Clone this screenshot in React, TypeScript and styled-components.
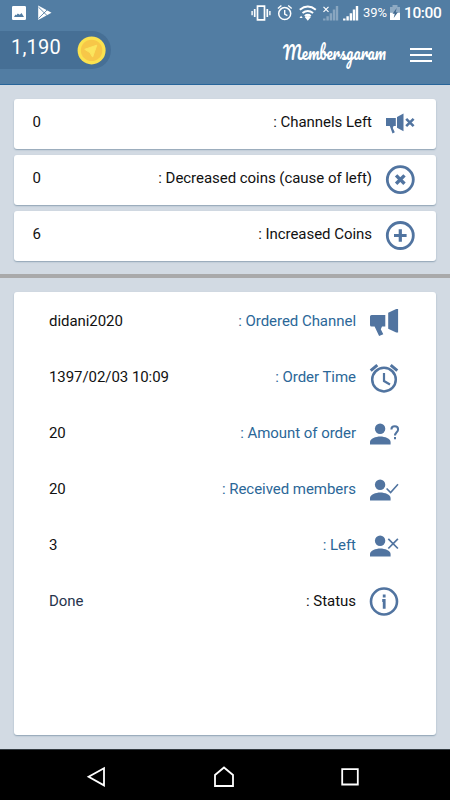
import React from "react";
import styled, { createGlobalStyle } from "styled-components";

const GlobalStyle = createGlobalStyle`
  * { box-sizing: border-box; }
  body { margin: 0; font-family: Roboto, "Noto Sans", sans-serif; }
  svg { display: block; overflow: visible; flex: none; }
`;

const BLUE = "#5174a0";

const Screen = styled.div`
  width: 450px;
  height: 800px;
  display: flex;
  flex-direction: column;
  background: #d2dae3;
  overflow: hidden;
`;

const Header = styled.header`
  height: 85px;
  flex: none;
  background: #527da3;
  border-bottom: 1px solid #27659a;
`;

const StatusBar = styled.div`
  height: 26px;
  display: flex;
  align-items: center;
  padding: 0 8px 0 11px;
  color: #fff;
`;

const StatusGroup = styled.div`
  display: flex;
  align-items: center;
  &:last-child { margin-left: auto; }
`;

const Percent = styled.span`
  width: 27px;
  padding-left: 1px;
  font-size: 13px;
  line-height: 26px;
  letter-spacing: -0.1px;
`;

const Clock = styled.span`
  width: 38px;
  font-size: 15.5px;
  line-height: 27px;
  font-weight: 500;
  letter-spacing: -0.4px;
`;

const AppBar = styled.div`
  height: 58px;
  padding-top: 5px;
  display: flex;
  align-items: flex-start;
`;

const CoinPill = styled.div`
  width: 111px;
  height: 38px;
  padding-left: 11px;
  display: flex;
  align-items: center;
  border-radius: 0 19px 19px 0;
  background: #466f95;
  color: #fff;
`;

const CoinCount = styled.span`
  width: 66px;
  font-size: 20px;
  line-height: 24px;
  margin-top: -6px;
  letter-spacing: 0.2px;
`;

const Brand = styled.svg`
  margin: 5px 23px 0 auto;
`;

const MenuButton = styled.button`
  width: 22px;
  height: 38px;
  margin: 5px 18px 0 0;
  padding: 0;
  border: 0;
  background: none;
  display: flex;
  flex-direction: column;
  align-items: stretch;
  padding-top: 12px;
  gap: 4px;
`;

const MenuLine = styled.span`
  height: 2px;
  background: #fff;
`;

const Summary = styled.section`
  padding: 14px 14px 13px;
  display: flex;
  flex-direction: column;
  gap: 6px;
`;

const Card = styled.div`
  background: #fff;
  border-radius: 3px;
  box-shadow: 0 1px 1.5px #8fa3b4;
`;

const SummaryCard = styled(Card)`
  height: 50px;
  display: flex;
  align-items: center;
  padding: 0 21px 4px 18.5px;
`;

const Divider = styled.div`
  height: 4px;
  flex: none;
  background: #a9a9aa;
`;

const Details = styled(Card)`
  height: 443px;
  flex: none;
  margin: 14px 14px 0;
`;

const DetailRow = styled.div`
  height: 56px;
  display: flex;
  align-items: center;
  padding: 2px 37px 0 35px;
`;

const Value = styled.span<{ $color?: string }>`
  font-size: 15px;
  line-height: 20px;
  letter-spacing: -0.06px;
  margin-right: auto;
  color: ${(p) => p.$color ?? "#111"};
`;

const Label = styled.span<{ $color?: string }>`
  font-size: 15px;
  line-height: 20px;
  letter-spacing: -0.04px;
  margin-right: 13px;
  color: ${(p) => p.$color ?? "#111"};
`;

const NavBar = styled.nav`
  height: 51px;
  margin-top: auto;
  flex: none;
  background: #000;
  border-top: 1px solid #333a40;
  display: flex;
  align-items: center;
  justify-content: space-between;
  padding: 3px 90px 0 86px;
`;

const IconBox = styled.svg<{ $drop?: number }>`
  margin-top: ${(p) => p.$drop ?? 0}px;
`;

const Icon = ({ children, drop }: { children: React.ReactNode; drop?: number }) => (
  <IconBox $drop={drop} width="30" height="30" viewBox="0 0 30 30" fill="none" stroke={BLUE}>
    {children}
  </IconBox>
);

const ChannelLeftIcon = () => (
  <Icon drop={4}>
    <path d="M1 9h9.8v8H8.6l-.8 2 2 4.2-2.3 1.2L4.8 17H1zM12 8l6.5-3.4v17.7L12 18.7z" fill={BLUE} stroke="none" />
    <path d="m21.2 9.8 7.4 7.4m0-7.4-7.4 7.4" strokeWidth="2.6" />
  </Icon>
);
const DecreasedIcon = () => (
  <Icon drop={4}>
    <circle cx="15.3" cy="14.6" r="13" strokeWidth="2.8" />
    <path d="m11.1 10.4 8.4 8.4m0-8.4-8.4 8.4" strokeWidth="3.4" />
  </Icon>
);
const IncreasedIcon = () => (
  <Icon drop={4}>
    <circle cx="15.3" cy="14.5" r="13" strokeWidth="2.8" />
    <path d="M15.3 8.2v12.6M9 14.5h12.6" strokeWidth="3.2" />
  </Icon>
);
const MegaphoneIcon = () => (
  <Icon>
    <path
      d="M2.6 9H16.3v11.6H13l-1.2 2.6 2.5 5-4.2 1.9L5.6 20.6H2.6Q1 20.6 1 19v-8.4Q1 9 2.6 9zM19.2 6.7l8-3.7h1.9v23.4h-1.9l-8-3.7z"
      fill={BLUE}
      stroke="none"
    />
  </Icon>
);
const AlarmIcon = () => (
  <Icon>
    <circle cx="15" cy="17.6" r="11.8" strokeWidth="2.5" />
    <path d="m1.7 8.6 6.6-5.5m13.4 0 6.6 5.5" strokeWidth="3" />
    <path d="M15 11v8l6 3.5" strokeWidth="2.2" />
  </Icon>
);
const Person = () => (
  <>
    <circle cx="11.1" cy="10.8" r="5.2" fill={BLUE} stroke="none" />
    <path d="M1 26.4v-2.5c0-3.4 5.8-5.5 10.3-5.5s10.3 2.1 10.3 5.5v2.5z" fill={BLUE} stroke="none" />
  </>
);
const AmountIcon = () => (
  <Icon>
    <Person />
    <path d="M22.4 11.4c0-4.1 6.7-4.1 6.7 0 0 2.7-3.1 3-3.1 6.2m0 1.5v2.2" strokeWidth="2" />
  </Icon>
);
const ReceivedIcon = () => (
  <Icon>
    <Person />
    <path d="m17.6 14.5 4 4L29 10.3" strokeWidth="1.6" />
  </Icon>
);
const LeftIcon = () => (
  <Icon>
    <Person />
    <path d="m19.3 8.9 9.6 9.6m0-9.6-9.6 9.6" strokeWidth="1.7" />
  </Icon>
);
const InfoIcon = () => (
  <Icon>
    <circle cx="15" cy="15.5" r="13" strokeWidth="2.6" />
    <path d="M15.2 8.4v3M13.2 14.5h2v8.2" strokeWidth="2.8" />
  </Icon>
);

const summary = [
  { value: "0", label: ": Channels Left", icon: <ChannelLeftIcon /> },
  { value: "0", label: ": Decreased coins (cause of left)", icon: <DecreasedIcon /> },
  { value: "6", label: ": Increased Coins", icon: <IncreasedIcon /> },
];

const LINK = "#2b6798";
const details = [
  { value: "didani2020", label: ": Ordered Channel", color: LINK, icon: <MegaphoneIcon /> },
  { value: "1397/02/03 10:09", label: ": Order Time", color: LINK, icon: <AlarmIcon /> },
  { value: "20", label: ": Amount of order", color: LINK, icon: <AmountIcon /> },
  { value: "20", label: ": Received members", color: LINK, icon: <ReceivedIcon /> },
  { value: "3", label: ": Left", color: LINK, icon: <LeftIcon /> },
  { value: "Done", label: ": Status", valueColor: "#26344d", icon: <InfoIcon /> },
];

const LeftStatusIcons = () => (
  <svg width="42" height="26" viewBox="11 0 42 26">
    <path fillRule="evenodd" fill="#fff" d="M13.3 6h11.4Q26 6 26 7.3v11.4Q26 20 24.7 20H13.3Q12 20 12 18.7V7.3Q12 6 13.3 6zM14 17h10l-2.5-4-1.7 1.8-2-1.3-1.5 1.7-.8-.7z" />
    <path d="M38.2 5.6 51.5 12.8 38.2 20z" fill="#fff" />
    <path d="m38.5 7.2 9 8.8m-9 2.4 9-8.8" stroke="#527da3" strokeWidth="0.9" />
  </svg>
);

const RightStatusIcons = () => (
  <svg width="112" height="26" viewBox="250 0 112 26" fill="none" stroke="#fff">
    <path d="M257.5 6.2h7v13.6h-7zM254.7 9v8m12.6-8v8" strokeWidth="1.7" />
    <path d="M252.1 11v4.3m17.8-4.3v4.3" strokeWidth="1.4" />
    <circle cx="284.7" cy="13.6" r="6" strokeWidth="1.5" />
    <path d="m277.9 8.5 3.5-3m6.8 0 3.5 3M284.7 10v4l2.7 1.7" strokeWidth="1.4" />
    <path d="M299.8 9.7c5-4 11-4 16 0M302.5 13c3.6-2.8 7-2.8 10.6 0M304.8 16c2-1.5 4-1.5 6 0" strokeWidth="2" />
    <path d="m304.7 17 3.1 3.8 3.1-3.8c-2-1.2-4.2-1.2-6.2 0zM299.5 18l1.6-2.3 1.6 2.3z" fill="#fff" stroke="none" />
    <path d="m323.5 6.8 5 5m0-5-5 5" strokeWidth="1.2" />
    <g strokeWidth="2.4">
      <path d="M324.3 20.5v-2m3.3 2v-4.3m3.3 4.3v-7.3m3.1 7.3V9.5m3 11V6" opacity=".32" />
      <path d="M344.3 20.5v-2m3.3 2v-4.3m3.3 4.3v-7.3m3.1 7.3V9.5m3 11V6" />
    </g>
  </svg>
);

const Battery = () => (
  <svg width="15" height="26" viewBox="389 0 15 26">
    <path d="M390 7h2.5V5h5v2h2.5v6h-10z" fill="#fff" opacity=".35" />
    <path d="M390 12.8h10V20h-10z" fill="#fff" />
    <path d="m396.7 8-4.2 5.8h2.2l-1 4.2 4.2-5.7h-2.2z" fill="#416a90" />
  </svg>
);

const Coin = () => (
  <svg width="29" height="29" viewBox="0 0 29 29">
    <circle cx="14.6" cy="14.4" r="14" fill="#fbe24f" />
    <circle cx="14.6" cy="14.4" r="10.7" fill="#f7c748" />
    <path d="M7.7 13.3 19.8 9.2l-4.2 11.9-2.7-4.5z" fill="#fbe55d" stroke="#fbe55d" strokeLinejoin="round" />
  </svg>
);

export default function App() {
  return (
    <Screen>
      <GlobalStyle />
      <Header>
        <StatusBar>
          <StatusGroup>
            <LeftStatusIcons />
          </StatusGroup>
          <StatusGroup>
            <RightStatusIcons />
            <Percent>39%</Percent>
            <Battery />
            <Clock>10:00</Clock>
          </StatusGroup>
        </StatusBar>
        <AppBar>
          <CoinPill>
            <CoinCount>1,190</CoinCount>
            <Coin />
          </CoinPill>
          <Brand width="104" height="34" viewBox="0 0 104 34">
            <text
              x="0"
              y="24"
              textLength="103"
              lengthAdjust="spacingAndGlyphs"
              fill="#fff"
              fontFamily='"Pacifico", cursive'
              fontSize="20"
            >
              Membersgaram
            </text>
          </Brand>
          <MenuButton aria-label="Menu">
            <MenuLine />
            <MenuLine />
            <MenuLine />
          </MenuButton>
        </AppBar>
      </Header>
      <Summary>
        {summary.map((item) => (
          <SummaryCard key={item.label}>
            <Value>{item.value}</Value>
            <Label>{item.label}</Label>
            {item.icon}
          </SummaryCard>
        ))}
      </Summary>
      <Divider />
      <Details>
        {details.map((item) => (
          <DetailRow key={item.label}>
            <Value $color={item.valueColor}>{item.value}</Value>
            <Label $color={item.color}>{item.label}</Label>
            {item.icon}
          </DetailRow>
        ))}
      </Details>
      <NavBar>
        <svg width="20" height="22" viewBox="0 0 20 22" fill="none" stroke="#fff" strokeWidth="1.8">
          <path d="M18 2.2v17.2L2.6 10.8z" />
        </svg>
        <svg width="22" height="22" viewBox="0 0 22 22" fill="none" stroke="#fff" strokeWidth="1.8">
          <path d="M3 20V9l9-7.5L21 9v11z" />
        </svg>
        <svg width="20" height="22" viewBox="0 0 20 22" fill="none" stroke="#fff" strokeWidth="1.8">
          <path d="M2.2 3.2h15.6v15.3H2.2z" />
        </svg>
      </NavBar>
    </Screen>
  );
}
